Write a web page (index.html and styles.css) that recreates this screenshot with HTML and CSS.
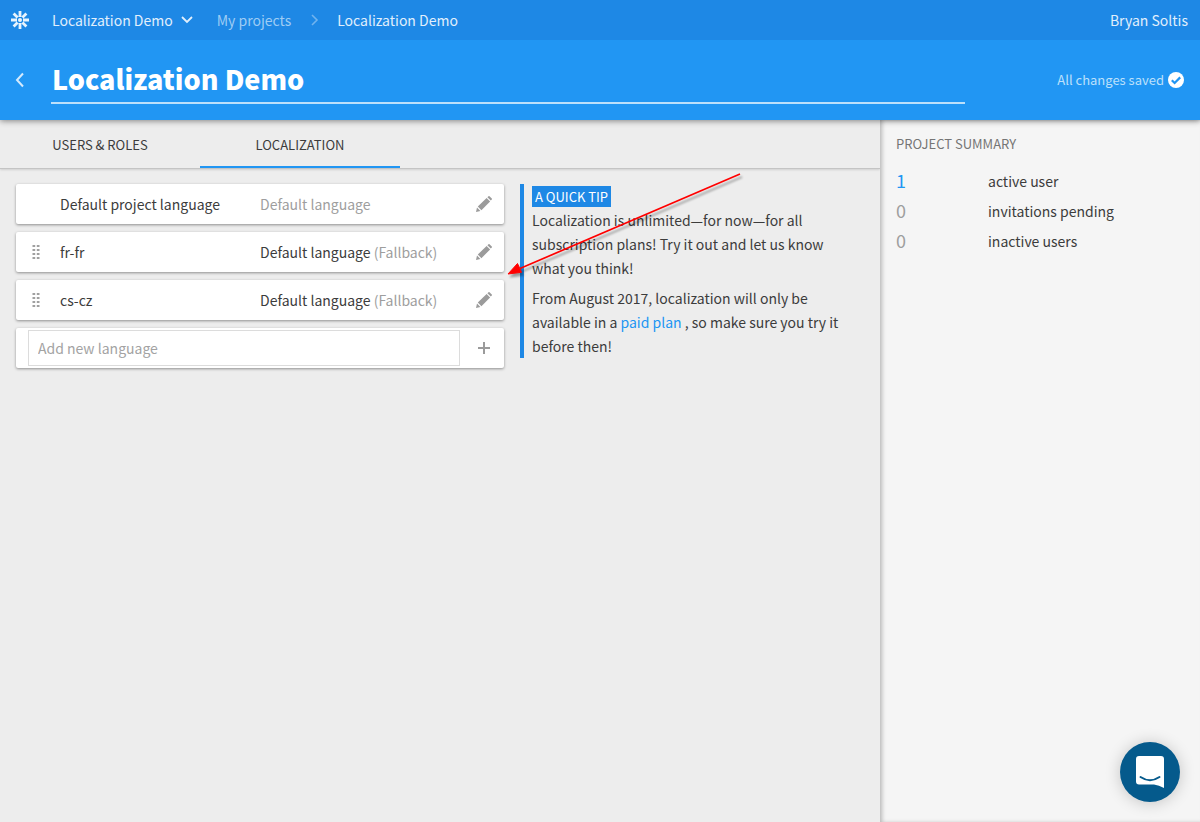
FILE: index.html
```html
<!DOCTYPE html>
<html lang="en">
<head>
<meta charset="utf-8">
<meta name="viewport" content="width=device-width, initial-scale=1">
<title>Localization Demo</title>
<link rel="stylesheet" href="styles.css">
</head>
<body>
<svg class="sprite" aria-hidden="true">
  <symbol id="pencil" viewBox="0 0 16 16">
    <path d="M0 16l1-4.4L4.400 15z M1.800 10.600L10.600 1.900l3.500 3.500-8.700 8.800z M11.400 1.200L12.500.2q.5-.4 1 0l2.300 2.300q.4.500 0 1l-1 1.100z"/>
  </symbol>
  <symbol id="grip" viewBox="0 0 8 14">
    <path d="M.5 0h2.700v2H.5zM4.800 0h2.700v2H4.800zM.5 4h2.700v2H.5zM4.800 4h2.700v2H4.800zM.5 8h2.700v2H.5zM4.800 8h2.700v2H4.800zM.5 12h2.700v2H.5zM4.800 12h2.700v2H4.800z"/>
  </symbol>
</svg>
<div class="app">
  <nav class="topbar" aria-label="Breadcrumb">
    <a class="logo" href="#" aria-label="Home">
      <svg width="18" height="18" viewBox="0 0 18 18" fill="none" stroke="currentColor">
        <path stroke-width="2.800" d="M9 0v6M9 12v6M0 9h6M12 9h6M2.600 2.600l4 4M11.400 11.400l4 4M15.400 2.600l-4 4M6.600 11.400l-4 4"/>
        <circle cx="9" cy="9" r="2" fill="currentColor" stroke="none"/>
      </svg>
    </a>
    <button class="project-menu" type="button">Localization Demo
      <svg width="12" height="8" viewBox="0 0 12 8" fill="none" stroke="currentColor" stroke-width="1.800"><path d="M1 1l5 5 5-5"/></svg>
    </button>
    <a class="crumb" href="#">My projects</a>
    <svg class="crumb-arrow" width="8" height="12" viewBox="0 0 8 12" fill="none" stroke="currentColor" stroke-width="1.600"><path d="M1 1l5 5-5 5"/></svg>
    <a class="crumb-current" href="#">Localization Demo</a>
    <a class="user" href="#">Bryan Soltis</a>
  </nav>
  <header class="header">
    <button class="back" type="button" aria-label="Back">
      <svg width="10" height="16" viewBox="0 0 10 16" fill="none" stroke="currentColor" stroke-width="2"><path d="M8 1.500L2 8l6 6.500"/></svg>
    </button>
    <input class="title" type="text" value="Localization Demo" aria-label="Project name">
    <div class="status">All changes saved
      <svg width="16" height="16" viewBox="0 0 16 16"><circle cx="8" cy="8" r="8" fill="#fff"/><path d="M3.800 8.200l2.800 2.800 5.600-5.600" fill="none" stroke="#2196f3" stroke-width="2.200"/></svg>
    </div>
  </header>
  <div class="body">
    <main class="main">
      <div class="tabs">
        <a class="tab" href="#">USERS &amp; ROLES</a>
        <a class="tab tab-active" href="#" aria-current="page">LOCALIZATION</a>
      </div>
      <div class="content">
        <div class="languages">
          <div class="card">
            <span class="grip"></span>
            <span class="name">Default project language</span>
            <span class="fallback muted">Default language</span>
            <button class="action" type="button" aria-label="Edit"><svg width="16" height="16"><use href="#pencil"/></svg></button>
          </div>
          <div class="card">
            <span class="grip"><svg width="8" height="14"><use href="#grip"/></svg></span>
            <span class="name">fr-fr</span>
            <span class="fallback">Default language <span class="muted">(Fallback)</span></span>
            <button class="action" type="button" aria-label="Edit fr-fr"><svg width="16" height="16"><use href="#pencil"/></svg></button>
          </div>
          <div class="card">
            <span class="grip"><svg width="8" height="14"><use href="#grip"/></svg></span>
            <span class="name">cs-cz</span>
            <span class="fallback">Default language <span class="muted">(Fallback)</span></span>
            <button class="action" type="button" aria-label="Edit cs-cz"><svg width="16" height="16"><use href="#pencil"/></svg></button>
          </div>
          <div class="card card-new">
            <input class="new-language" type="text" placeholder="Add new language" aria-label="Add new language">
            <button class="action" type="button" aria-label="Add language"><svg width="12" height="12" viewBox="0 0 12 12"><path d="M5 0h2v5h5v2H7v5H5V7H0V5h5z"/></svg></button>
          </div>
        </div>
        <aside class="tip">
          <strong class="tip-label">A QUICK TIP</strong>
          <p>Localization is unlimited—for now—for all subscription plans! Try it out and let us know what you think!</p>
          <p>From August 2017, localization will only be available in a <a href="#">paid plan</a> , so make sure you try it before then!</p>
          <svg class="arrow" width="240" height="110" viewBox="0 0 240 110" aria-hidden="true">
            <path d="M234 2L14 96.500" stroke="#f00" stroke-width="1.700"/>
            <path d="M2 102L11.500 91.500l4 8.800z" fill="#f00" stroke="#f00"/>
          </svg>
        </aside>
      </div>
    </main>
    <aside class="summary">
      <h2>PROJECT SUMMARY</h2>
      <dl>
        <dt class="count-active">1</dt><dd>active user</dd>
        <dt>0</dt><dd>invitations pending</dd>
        <dt>0</dt><dd>inactive users</dd>
      </dl>
    </aside>
  </div>
  <button class="chat" type="button" aria-label="Open chat">
    <svg width="28" height="32" viewBox="0 0 28 32">
      <path d="M3 0h22q3 0 3 3v29q-5-3-10-3.500H3q-3 0-3-3V3q0-3 3-3z" fill="#fff"/>
      <path d="M4.500 21q9.500 6.400 19 0" fill="none" stroke="#055a8c" stroke-width="2" stroke-linecap="round"/>
    </svg>
  </button>
</div>
</body>
</html>
```

FILE: styles.css
```css
* { box-sizing: border-box; }
body {
  margin: 0;
  background: #ededed;
  color: #3c3c3c;
  font: 14px/24px "Source Sans Pro", "Noto Sans CJK SC", sans-serif;
}
button, input { font: inherit; color: inherit; border: 0; background: none; padding: 0; margin: 0; }
button { cursor: pointer; }
a { color: inherit; text-decoration: none; }
svg { display: block; fill: currentColor; }
.sprite { position: absolute; width: 0; height: 0; }

.app { display: flex; flex-direction: column; min-height: 100vh; }
.topbar {
  position: relative;
  z-index: 3;
  display: flex;
  align-items: center;
  min-height: 40px;
  padding: 0 12px 0 11px;
  background: #1e88e5;
  color: #e1effc;
}
.logo { margin-right: 23px; color: #e8f3fd; }
.project-menu { display: flex; align-items: center; gap: 8px; margin-right: 24px; }
.crumb { margin-right: 20px; color: #9fccf4; }
.crumb-arrow { margin-right: 18px; color: #71b3ee; fill: none; }
.project-menu svg, .logo svg, .back svg { fill: none; }
.user { margin-left: auto; }

.header {
  position: relative;
  z-index: 2;
  display: flex;
  align-items: center;
  min-height: 80px;
  padding: 0 16px 0 15px;
  background: #2196f3;
  box-shadow: 0 1px 6px rgba(0, 0, 0, .45);
}
.back { margin-right: 26px; color: #d3eafd; }
.title {
  flex: 1;
  min-width: 0;
  height: 48px;
  padding: 0 1px 2px;
  border-bottom: 2px solid #bce0fb;
  color: #fff;
  font-size: 27px;
  font-weight: 900;
}
.status {
  display: flex;
  align-items: center;
  justify-content: flex-end;
  gap: 4px;
  width: 219px;
  color: #bce0fb;
  font-size: 13px;
}

.body { display: grid; grid-template-columns: minmax(0, 1fr) 320px; flex: 1; }
.tabs {
  display: flex;
  height: 49px;
  border-bottom: 1px solid #c4c4c4;
  box-shadow: 0 1px 2px rgba(0, 0, 0, .12);
  font-size: 13px;
}
.tab { width: 200px; padding-top: 13px; border-bottom: 2px solid transparent; text-align: center; }
.tab-active { border-color: #2196f3; }
.content { display: flex; gap: 16px; padding: 15px 16px; }
.languages { display: flex; flex-direction: column; gap: 8px; flex: 0 1 488px; }
.card {
  display: flex;
  align-items: center;
  height: 40px;
  border-radius: 2px;
  background: #fff;
  box-shadow: 0 1px 3px rgba(0, 0, 0, .4);
}
.grip { display: flex; justify-content: center; width: 40px; color: #a0a0a0; }
.name { width: 200px; padding-left: 4px; }
.fallback { flex: 1; padding-left: 4px; }
.muted { color: #9e9e9e; }
.action { display: flex; align-items: center; justify-content: center; width: 40px; height: 40px; color: #9b9b9b; }
.card-new { gap: 4px; padding-left: 12px; }
.new-language { flex: 1; min-width: 0; height: 36px; padding: 0 9px; border: 1px solid #dcdcdc; }
.new-language::placeholder { color: #a3a3a3; opacity: 1; }

.tip { position: relative; flex: 1; padding: 2px 16px 0 8px; border-left: 4px solid #1e88e5; align-self: flex-start; }
.tip-label {
  display: table;
  margin-bottom: 1px;
  padding: 0 3px;
  background: #1e88e5;
  color: #fff;
  font-size: 13px;
  font-weight: 400;
  line-height: 21px;
}
.tip p { margin: 0 0 6px; }
.tip p:last-of-type { margin: 0; }
.tip a { color: #2196f3; }
.arrow {
  position: absolute;
  left: -18px;
  top: -12px;
  pointer-events: none;
  filter: drop-shadow(2px 3px 1px rgba(0, 0, 0, .35));
}

.summary { padding: 12px 16px; background: #f5f5f5; box-shadow: inset 3px 0 4px -1px rgba(0, 0, 0, .25); }
.summary h2 { margin: 0 0 10px; color: #757575; font-size: 13px; font-weight: 400; line-height: 24px; }
.summary dl { display: grid; grid-template-columns: 92px 1fr; margin: 0; line-height: 30px; }
.summary dt { color: #9e9e9e; font-size: 18px; line-height: 28px; }
.summary .count-active { color: #2196f3; }
.summary dd { margin: 0; }

.chat {
  position: fixed;
  right: 20px;
  bottom: 20px;
  display: flex;
  align-items: center;
  justify-content: center;
  width: 60px;
  height: 60px;
  border-radius: 50%;
  background: #055a8c;
  box-shadow: 0 1px 16px rgba(0, 0, 0, .2);
}
```
